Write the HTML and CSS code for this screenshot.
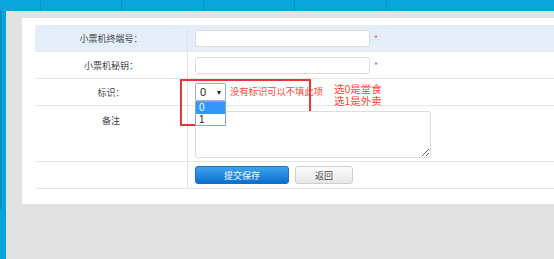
FILE: index.html
```html
<!DOCTYPE html>
<html lang="zh-CN">
<head>
  <meta charset="UTF-8">
  <title>小票机设置</title>
  <link rel="stylesheet" href="styles.css">
</head>
<body>
  <div class="topbar">
    <div class="tab tab-a"></div>
    <div class="tab tab-b"></div>
    <div class="tab tab-c"></div>
    <div class="tab tab-d"></div>
    <div class="tab tab-e"></div>
    <div class="tab tab-f"></div>
  </div>

  <div class="layout">
    <div class="sidebar"><div class="sidebar-edge"></div></div>

    <div class="main">
      <div class="panel">
        <table class="form-table">
          <tr class="row-hl">
            <td class="label">小票机终端号：</td>
            <td class="value">
              <input class="text-input" type="text">
              <span class="required">*</span>
            </td>
          </tr>
          <tr>
            <td class="label">小票机秘钥：</td>
            <td class="value">
              <input class="text-input" type="text">
              <span class="required">*</span>
            </td>
          </tr>
          <tr>
            <td class="label">标识：</td>
            <td class="value value-flag">
              <div class="flag-line">
                <div class="fake-select">
                  <span>0</span>
                  <span class="caret"></span>
                  <!-- opened option list -->
                  <ul class="dropdown">
                    <li class="active">0</li>
                    <li>1</li>
                  </ul>
                </div>
                <span class="hint">没有标识可以不填此项</span>
                <div class="note">
                  <div>选0是堂食</div>
                  <div>选1是外卖</div>
                </div>
              </div>
              <div class="mark-box"></div>
            </td>
          </tr>
          <tr>
            <td class="label label-top">备注</td>
            <td class="value value-area">
              <textarea class="text-area"></textarea>
            </td>
          </tr>
          <tr>
            <td class="label"></td>
            <td class="value value-btns">
              <button class="btn btn-primary">提交保存</button>
              <button class="btn btn-default">返回</button>
            </td>
          </tr>
        </table>
      </div>
    </div>
  </div>
</body>
</html>
```

FILE: styles.css
```css
html, body {
  margin: 0;
  padding: 0;
  height: 100%;
  overflow: hidden;
}
body {
  font-family: "Noto Sans CJK SC", "DejaVu Sans", sans-serif;
  background-color: #e2e2e2;
  color: #333;
}

/* top navigation */
.topbar {
  display: flex;
  height: 11px;
  background-color: #08a4dc;
}
.tab {
  height: 11px;
  border-right: 1px solid #0793c5;
}
.tab-a { width: 40px; }
.tab-b { width: 80px; }
.tab-c { width: 81px; }
.tab-d { width: 90px; }
.tab-e { width: 91px; }
.tab-f { flex: 1; border-right: none; }

.layout {
  display: flex;
  height: 248px;
}
.sidebar {
  width: 6px;
  background-color: #08a4dc;
}
.sidebar-edge {
  width: 2px;
  height: 198px;
  background-color: #0790c2;
}
.main {
  flex: 1;
  padding: 7px 0 0 16px;
  overflow: hidden;
}
.panel {
  background-color: #fff;
  height: 169px;
  padding: 7px 0 10px 13px;
  overflow: hidden;
}

/* form table */
.form-table {
  width: 560px;
  border-collapse: collapse;
  font-size: 9px;
}
.form-table td {
  border-bottom: 1px solid #e6e6e6;
  padding: 0;
}
.row-hl td {
  background-color: #e3eef9;
}
.label {
  width: 152px;
  height: 26px;
  text-align: center;
  border-right: 1px solid #e3e3e3;
  color: #444;
}
.label-top {
  vertical-align: top;
  padding-top: 8px !important;
}
.value {
  padding-left: 7px !important;
  position: relative;
}
.text-input {
  width: 173px;
  height: 15px;
  border: 1px solid #ddd;
  border-radius: 3px;
  background: #fff;
  padding: 0;
  margin: 0;
  vertical-align: middle;
}
.required {
  color: #f55;
  font-size: 9px;
  margin-left: 2px;
  vertical-align: middle;
}

/* flag row */
.value-flag {
  height: 26px;
}
.flag-line {
  display: flex;
  align-items: flex-start;
  height: 22px;
  padding-top: 4px;
}
.fake-select {
  position: relative;
  width: 28px;
  height: 16px;
  border: 1px solid #8fb1de;
  border-radius: 2px;
  background: #fff;
  font-family: "Liberation Sans", sans-serif;
  font-size: 11px;
  line-height: 16px;
  padding-left: 1px;
  color: #222;
}
.fake-select span {
  margin-left: 3px;
}
.caret {
  position: absolute;
  right: 4px;
  top: 7px;
  width: 0;
  height: 0;
  border-left: 2px solid transparent;
  border-right: 2px solid transparent;
  border-top: 4px solid #222;
  margin: 0 !important;
}
.dropdown {
  position: absolute;
  left: -1px;
  top: 17px;
  width: 29px;
  margin: 0;
  padding: 0;
  list-style: none;
  background: #fff;
  border: 1px solid #8aa6c8;
  font-family: "Liberation Sans", sans-serif;
  font-size: 10px;
  line-height: 11.5px;
  z-index: 2;
}
.dropdown li {
  padding-left: 3px;
  height: 11.5px;
}
.dropdown .active {
  background-color: #3296fa;
  color: #fff;
}
.hint {
  color: #f43;
  font-size: 9.3px;
  line-height: 12px;
  margin-left: 4px;
  margin-top: 2px;
}
.note {
  color: #f43;
  font-size: 10.5px;
  line-height: 12px;
  margin-left: 11px;
  margin-top: 0;
}
.note div {
  height: 12px;
}
.mark-box {
  position: absolute;
  left: -8px;
  top: 0px;
  width: 127px;
  height: 43px;
  border: 2px solid #e9343b;
}

/* remarks */
.value-area {
  padding-top: 5px !important;
  padding-bottom: 3px !important;
}
.text-area {
  display: block;
  width: 234px;
  height: 45px;
  border: 1px solid #ddd;
  border-radius: 3px;
  margin: 0;
  padding: 0;
}

/* buttons */
.value-btns {
  height: 26px;
}
.btn {
  height: 18px;
  border-radius: 3px;
  font-family: "Noto Sans CJK SC", sans-serif;
  font-size: 9px;
  padding: 0;
  vertical-align: middle;
  cursor: pointer;
}
.btn-primary {
  width: 94px;
  border: 1px solid #1a6fc0;
  color: #fff;
  background: linear-gradient(#3fa4ee, #0b6fd0);
}
.btn-default {
  width: 58px;
  margin-left: 4px;
  border: 1px solid #cfcfcf;
  color: #444;
  background: linear-gradient(#fdfdfd, #e6e6e6);
}
```
